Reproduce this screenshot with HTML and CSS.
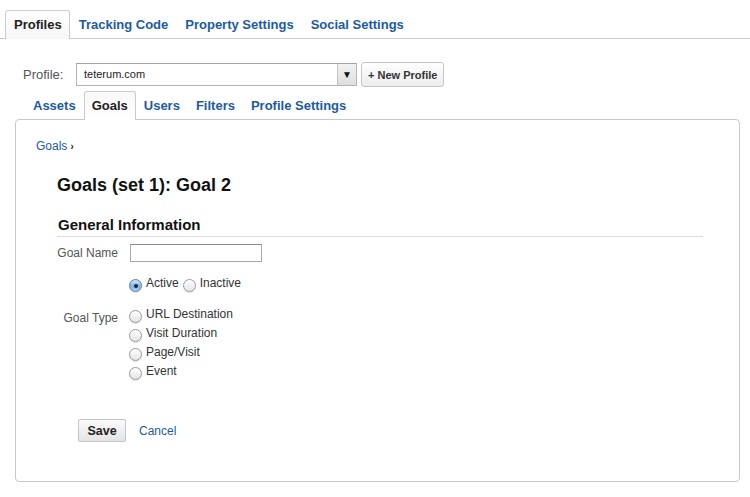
FILE: index.html
```html
<!DOCTYPE html>
<html lang="en">
<head>
<meta charset="utf-8">
<title>Goals</title>
<link rel="stylesheet" href="styles.css">
</head>
<body>
<div class="top-tabs">
  <a class="tab active">Profiles</a>
  <a class="tab">Tracking Code</a>
  <a class="tab">Property Settings</a>
  <a class="tab">Social Settings</a>
</div>
<div class="profile-row">
  <span class="profile-label">Profile:</span>
  <div class="select"><span class="select-value">teterum.com</span><span class="select-arrow">&#9660;</span></div>
  <button class="btn btn-new">+ New Profile</button>
</div>
<div class="main">
  <div class="sub-tabs">
    <a class="subtab">Assets</a>
    <a class="subtab active">Goals</a>
    <a class="subtab">Users</a>
    <a class="subtab">Filters</a>
    <a class="subtab">Profile Settings</a>
  </div>
  <div class="panel">
    <div class="breadcrumb"><a class="link">Goals</a><span class="crumb-sep">&#8250;</span></div>
    <div class="section">
      <h1 class="title">Goals (set 1): Goal 2</h1>
      <h2 class="subtitle">General Information</h2>
      <div class="form-row">
        <span class="form-label">Goal Name</span>
        <div class="field"><input class="text-input" type="text"></div>
      </div>
      <div class="form-row status-row">
        <span class="form-label"></span>
        <div class="field"><span class="opt"><span class="radio checked"></span>Active</span><span class="opt opt-next"><span class="radio"></span>Inactive</span></div>
      </div>
      <div class="form-row type-row">
        <span class="form-label type-label">Goal Type</span>
        <div class="field options">
          <div class="opt-line"><span class="radio"></span>URL Destination</div>
          <div class="opt-line"><span class="radio"></span>Visit Duration</div>
          <div class="opt-line"><span class="radio"></span>Page/Visit</div>
          <div class="opt-line"><span class="radio"></span>Event</div>
        </div>
      </div>
      <div class="actions">
        <button class="btn btn-save">Save</button>
        <a class="link cancel">Cancel</a>
      </div>
    </div>
  </div>
</div>
</body>
</html>
```
FILE: styles.css
```css
html, body {
  margin: 0;
  padding: 0;
  background: #fff;
}
body {
  font-family: "Liberation Sans", Arial, Helvetica, sans-serif;
  color: #333;
  width: 750px;
  height: 497px;
  overflow: hidden;
}

/* top tabs */
.top-tabs {
  display: flex;
  align-items: flex-end;
  padding: 10px 0 0 5px;
  border-bottom: 1px solid #cccccc;
}
.tab {
  display: block;
  font-size: 13px;
  font-weight: bold;
  line-height: 27px;
  padding: 0 7px 0 8px;
  border: 1px solid transparent;
  border-bottom: 0;
  color: #1b5ba3;
  white-space: nowrap;
}
.tab.active {
  color: #222;
  border-color: #cccccc;
  border-radius: 3px 3px 0 0;
  background: linear-gradient(#ffffff, #f6f6f6);
  margin-bottom: -1px;
  padding-bottom: 1px;
}

/* profile row */
.profile-row {
  display: flex;
  align-items: center;
  height: 25px;
  margin-top: 23px;
  padding-left: 23px;
}
.profile-label {
  width: 53px;
  font-size: 13px;
  color: #555;
}
.select {
  display: flex;
  width: 281px;
  height: 23px;
  box-sizing: border-box;
  border: 1px solid #b4b4b4;
  border-top-color: #a4a4a4;
  background: #fff;
}
.select-value {
  flex: 1;
  padding-left: 7px;
  font-size: 11px;
  line-height: 21px;
  color: #222;
}
.select-arrow {
  width: 18px;
  border-left: 1px solid #c2c2c2;
  background: linear-gradient(#f2f2f2, #dedede);
  font-size: 10px;
  line-height: 21px;
  text-align: center;
  color: #111;
}
.btn {
  font-family: "Liberation Sans", Arial, Helvetica, sans-serif;
  font-weight: bold;
  color: #333;
  border: 1px solid #c6c6c6;
  border-radius: 3px;
  background: linear-gradient(#ffffff, #ececec);
  box-sizing: border-box;
  margin: 0;
  cursor: pointer;
}
.btn-new {
  margin-left: 4px;
  height: 25px;
  padding: 0 6px;
  font-size: 11px;
}

/* main */
.main {
  margin: 4px 0 0 15px;
  width: 725px;
}
.sub-tabs {
  display: flex;
  align-items: flex-end;
  padding-left: 10px;
}
.subtab {
  display: block;
  position: relative;
  font-size: 13px;
  font-weight: bold;
  line-height: 27px;
  padding: 0 7px;
  border: 1px solid transparent;
  border-bottom: 0;
  color: #1b5ba3;
  white-space: nowrap;
}
.subtab.active {
  z-index: 1;
  color: #222;
  border-color: #cccccc;
  border-radius: 3px 3px 0 0;
  background: linear-gradient(#f8f8f8, #ffffff);
  margin-bottom: -1px;
  padding-bottom: 1px;
}
.panel {
  border: 1px solid #c8c8c8;
  border-radius: 4px;
  padding: 18px 36px 39px 20px;
}
.link {
  color: #1b5ba3;
  text-decoration: none;
}
.breadcrumb {
  font-size: 12px;
  line-height: 16px;
}
.crumb-sep {
  margin-left: 3px;
  color: #333;
  font-weight: bold;
  font-size: 11px;
}
.section {
  margin-left: 21px;
}
.title {
  margin: 20px 0 0;
  font-size: 18px;
  line-height: 22px;
  font-weight: bold;
  color: #111;
}
.subtitle {
  margin: 20px 0 0;
  padding: 0 0 2px 1px;
  font-size: 15px;
  line-height: 18px;
  font-weight: bold;
  color: #111;
  border-bottom: 1px solid #dddddd;
}
.form-row {
  display: flex;
  margin-top: 7px;
}
.form-label {
  width: 61px;
  flex: none;
  text-align: right;
  font-size: 12px;
  line-height: 18px;
  color: #555;
}
.field {
  margin-left: 12px;
  font-size: 12px;
  line-height: 19px;
  color: #333;
}
.text-input {
  display: block;
  width: 132px;
  height: 18px;
  box-sizing: border-box;
  margin: 0;
  padding: 0 3px;
  border: 1px solid #a9a9a9;
  border-top-color: #8c8c8c;
  font-size: 12px;
}
.status-row {
  margin-top: 12px;
}
.type-row {
  margin-top: 12px;
}
.type-label {
  padding-top: 4px;
  line-height: 19px;
}
.opt-next {
  margin-left: 4px;
}
.radio {
  display: inline-block;
  width: 13px;
  height: 13px;
  box-sizing: border-box;
  margin: 0 4px 0 -1px;
  border-radius: 50%;
  border: 1px solid #9a9a9a;
  background: linear-gradient(#ffffff, #e4e4e4);
  box-shadow: 0 1px 1px rgba(0, 0, 0, 0.12);
  vertical-align: -5px;
  position: relative;
}
.opt-next .radio {
  margin-left: 0;
}
.radio.checked {
  border-color: #5c7ea6;
  background: linear-gradient(#d6e8fa, #7fb3ea 55%, #a9cdf3);
}
.radio.checked::after {
  content: "";
  position: absolute;
  left: 3.5px;
  top: 3.5px;
  width: 4px;
  height: 4px;
  border-radius: 50%;
  background: #1b2633;
}
.actions {
  display: flex;
  align-items: center;
  margin-top: 38px;
}
.btn-save {
  margin-left: 21px;
  width: 48px;
  height: 23px;
  padding: 0;
  font-size: 12.5px;
  color: #222;
  border-radius: 2px;
  border-color: #c4c4c4;
  background: linear-gradient(#fbfbfb, #e4e4e4);
}
.cancel {
  margin-left: 13px;
  font-size: 12px;
}
```
